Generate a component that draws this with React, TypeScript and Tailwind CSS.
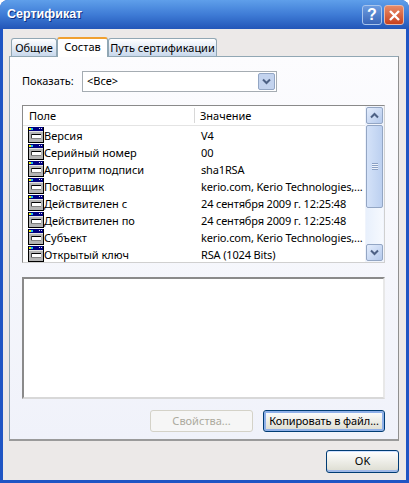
const fields = [
  ['Версия', 'V4'],
  ['Серийный номер', '00'],
  ['Алгоритм подписи', 'sha1RSA'],
  ['Поставщик', 'kerio.com, Kerio Technologies,...'],
  ['Действителен с', '24 сентября 2009 г. 12:25:48'],
  ['Действителен по', '24 сентября 2009 г. 12:25:48'],
  ['Субъект', 'kerio.com, Kerio Technologies,...'],
  ['Открытый ключ', 'RSA (1024 Bits)'],
]

function FieldIcon() {
  return (
    <svg width="16" height="16" viewBox="0 0 16 16" className="shrink-0" shapeRendering="crispEdges">
      <rect x="0" y="0" width="16" height="16" fill="#000" />
      <rect x="1" y="0" width="14" height="4" fill="#000080" />
      <rect x="1" y="1" width="2" height="2" fill="#f0f000" />
      <rect x="3" y="1" width="2" height="2" fill="#20c0f0" />
      <rect x="11" y="1" width="1" height="1" fill="#e0e0e0" />
      <rect x="13" y="1" width="1" height="1" fill="#e0e0e0" />
      <rect x="1" y="4" width="14" height="11" fill="#b4b4b4" />
      <rect x="1" y="4" width="14" height="1" fill="#e4e4e4" />
      <rect x="3" y="7" width="10" height="1" fill="#000" />
      <rect x="3" y="8" width="10" height="3" fill="#fff" />
      <rect x="3" y="7" width="1" height="5" fill="#404040" />
      <rect x="3" y="11" width="10" height="1" fill="#808080" />
    </svg>
  )
}

function ScrollButton({ up }: { up?: boolean }) {
  return (
    <div className="h-[17px] w-[17px] rounded-[2px] border border-[#93a6c4] bg-gradient-to-br from-[#e4edfc] to-[#b4c9ec] flex items-center justify-center">
      <svg width="9" height="7" viewBox="0 0 9 7">
        <path d={up ? 'M1 5.5 L4.5 2 L8 5.5' : 'M1 1.5 L4.5 5 L8 1.5'} fill="none" stroke="#4d6185" strokeWidth="2" />
      </svg>
    </div>
  )
}

export default function App() {
  return (
    <div className="w-[409px] h-[483px] flex flex-col overflow-hidden rounded-t-[8px] bg-[#1f55c4] text-[11px] text-black font-['Noto_Sans','Liberation_Sans',sans-serif]">
      {/* Title bar */}
      <div className="h-[29px] shrink-0 flex items-center pl-[7px] pr-[5px] bg-gradient-to-b from-[#5f9fea] via-[#3f7cd6] to-[#2356b8]">
        <span className="text-[12.5px] font-bold text-white [text-shadow:1px_1px_0_#0f2f80] font-['Liberation_Sans',sans-serif]">Сертификат</span>
        <div className="ml-auto flex gap-[2px] mt-px">
          <div className="w-[20px] h-[20px] rounded-[3px] border border-[#a8c4ec] bg-gradient-to-b from-[#6d9ce0] to-[#3a66b8] flex items-center justify-center text-white font-bold text-[16px] leading-none font-['Liberation_Sans',sans-serif]">?</div>
          <div className="w-[20px] h-[20px] rounded-[3px] border border-[#e8b8a8] bg-gradient-to-b from-[#e88a66] to-[#c8401c] flex items-center justify-center">
            <svg width="13" height="13" viewBox="0 0 13 13"><path d="M2 2 L11 11 M11 2 L2 11" stroke="#fff" strokeWidth="2.4" /></svg>
          </div>
        </div>
      </div>

      {/* Client area */}
      <div className="flex-1 mx-[3px] mb-[3px] bg-[#ece9e8] flex flex-col px-[6px] pt-[7px] min-h-0">
        {/* Tabs */}
        <div className="h-[20px] flex items-end shrink-0 pl-[2px] whitespace-nowrap">
          <div className="h-[18px] w-[46px] flex items-center justify-center pt-px border border-b-0 border-[#91a7b4] rounded-t-[3px] bg-gradient-to-b from-white to-[#c8d8ec]">Общие</div>
          <div className="relative z-10 h-[20px] w-[51px] flex items-center justify-center pb-[2px] border-x border-[#91a7b4] border-t-2 border-t-[#f0a030] rounded-t-[3px] bg-white -mb-px">Состав</div>
          <div className="h-[18px] w-[109px] flex items-center justify-center pt-px border border-b-0 border-[#91a7b4] rounded-t-[3px] bg-gradient-to-b from-white to-[#c8d8ec]">Путь сертификации</div>
        </div>

        {/* Panel */}
        <div className="w-[390px] h-[385px] shrink-0 border border-[#91a7b4] border-r-[#8f8f8f] border-b-2 border-b-[#9a9a9a] bg-gradient-to-b from-[#fcfcfe] to-[#f0f2fa] flex flex-col px-[12px] pt-[14px]">
          <div className="flex items-center h-[20px] shrink-0">
            <span className="w-[60px]">Показать:</span>
            <div className="w-[195px] h-[21px] border border-[#a5acb2] bg-white flex items-center justify-between pl-[4px] pr-px">
              <span>&lt;Все&gt;</span>
              <div className="w-[17px] h-[17px] rounded-[2px] border border-[#93a6c4] bg-[#c3d3ee] flex items-center justify-center">
                <svg width="9" height="7" viewBox="0 0 9 7"><path d="M1 1.5 L4.5 5 L8 1.5" fill="none" stroke="#4d6185" strokeWidth="2" /></svg>
              </div>
            </div>
          </div>

          {/* Field list */}
          <div className="mt-[14px] w-[363px] h-[158px] shrink-0 border border-[#8a8a8a] border-r-[#d0d0d0] border-b-[#d0d0d0] bg-white flex">
            <div className="flex-1 min-w-0 overflow-hidden">
              <div className="h-[20px] flex items-center border-b border-[#e4e4e4]">
                <span className="w-[172px] pl-[6px] border-r border-[#d8d8d8] leading-[14px] pt-px">Поле</span>
                <span className="pl-[5px] pt-px">Значение</span>
              </div>
              {fields.map(([name, value]) => (
                <div key={name} className="h-[17px] flex items-center pl-[5px] whitespace-nowrap">
                  <FieldIcon />
                  <span className="w-[157px] shrink-0 pt-[3px]">{name}</span>
                  <span className="pt-[3px] tracking-[-0.15px]">{value}</span>
                </div>
              ))}
            </div>
            <div className="w-[19px] shrink-0 p-px bg-[#f0f4fc] flex flex-col">
              <ScrollButton up />
              <div className="h-[83px] mt-px rounded-[2px] border border-[#93a6c4] bg-gradient-to-r from-[#d4e2f8] to-[#bcd0f0] flex items-center justify-center">
                <div className="w-[6px] h-[7px] bg-[repeating-linear-gradient(to_bottom,#8aa0c4_0,#8aa0c4_1px,#eef3fc_1px,#eef3fc_2px)]" />
              </div>
              <div className="flex-1 bg-gradient-to-r from-[#e8f0fc] to-[#f6f9fe]" />
              <ScrollButton />
            </div>
          </div>

          {/* Details box */}
          <div className="mt-[14px] w-[363px] h-[122px] shrink-0 border-2 border-[#8a8a8a] border-r-[#e8e8e8] border-b-[#d8d8d8] bg-white" />

          {/* Buttons */}
          <div className="mt-[11px] flex justify-end gap-[10px] w-[363px]">
            <button className="w-[103px] h-[22px] rounded-[3px] border border-[#d4d2c8] bg-[#f6f6f6] text-[#acaa9e]">Свойства...</button>
            <button className="w-[122px] h-[22px] rounded-[3px] border border-[#003c74] shadow-[inset_0_0_0_2px_#8fb0e8] bg-gradient-to-b from-white to-[#dcdcd0] tracking-[-0.1px]">Копировать в файл...</button>
          </div>
        </div>

        {/* OK */}
        <div className="mt-[9px] flex justify-end">
          <button className="w-[73px] h-[23px] mr-px rounded-[3px] border border-[#003c74] shadow-[inset_0_-2px_0_#9fb8e8,inset_0_1px_0_#cfe0ff] bg-gradient-to-b from-white to-[#dcdcd0]">OK</button>
        </div>
      </div>
    </div>
  )
}
